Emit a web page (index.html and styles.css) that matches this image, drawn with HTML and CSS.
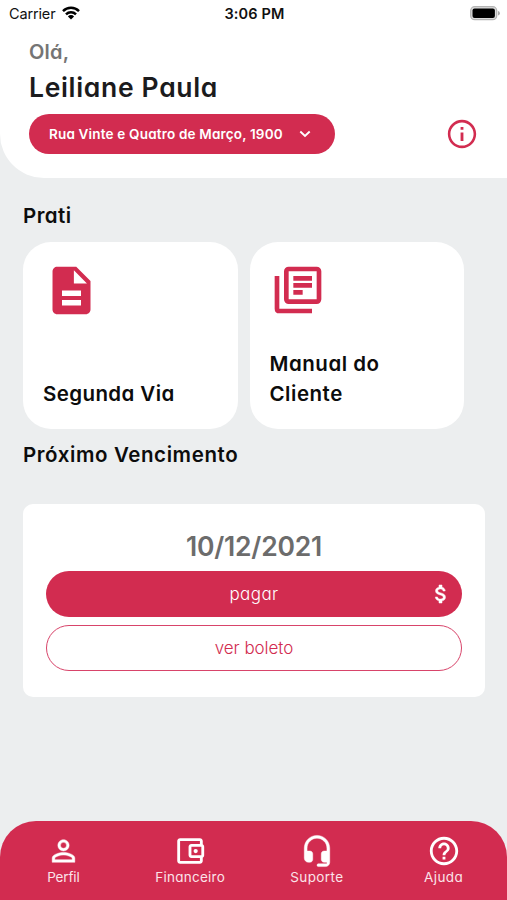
FILE: index.html
```
<!DOCTYPE html>
<html lang="pt-BR">
<head>
<meta charset="utf-8">
<title>Prati</title>
<link rel="stylesheet" href="styles.css">
</head>
<body>
<div class="app">
  <header class="header">
    <div class="status">
      <div class="carrier">Carrier
        <svg width="18" height="14" viewBox="0 0 18 14"><g fill="none" stroke="#000" stroke-width="2.5"><path d="M1 5.1a11.4 11.4 0 0 1 16 0"/><path d="M4 8.3a7.1 7.1 0 0 1 10 0"/></g><path d="M9 13.6 5.9 10.4a4.4 4.4 0 0 1 6.2 0z"/></svg>
      </div>
      <div class="time">3:06 PM</div>
      <svg class="battery" width="30" height="15" viewBox="0 0 30 15"><rect x=".7" y=".7" width="26" height="13" rx="4" fill="#ddd" stroke="#b4b4b4" stroke-width="1.3"/><rect x="2.5" y="2.4" width="22.4" height="9.6" rx="2"/><path d="M28 5v4.6q1.9-.6 1.9-2.3T28 5z" fill="#aaa"/></svg>
    </div>
    <p class="hello">Olá,</p>
    <h1 class="name">Leiliane Paula</h1>
    <div class="address-row">
      <button class="address"><span>Rua Vinte e Quatro de Março, 1900</span>
        <svg width="12" height="8" viewBox="0 0 12 8"><path d="m1.3 1.5 4.7 4.4 4.7-4.4" fill="none" stroke="#fff" stroke-width="1.9"/></svg>
      </button>
      <svg class="info" width="34" height="34" viewBox="0 0 24 24"><path d="M11 7h2v2h-2zm0 4h2v6h-2zm1-9C6.48 2 2 6.48 2 12s4.48 10 10 10 10-4.48 10-10S17.52 2 12 2zm0 18.2c-4.52 0-8.2-3.68-8.2-8.2S7.48 3.8 12 3.8s8.2 3.68 8.2 8.2-3.68 8.2-8.2 8.2z"/></svg>
    </div>
  </header>

  <main class="main">
    <h2 class="title">Prati</h2>
    <div class="cards">
      <a class="card">
        <svg width="57" height="57" viewBox="0 0 24 24"><path d="M14 2H6c-1.1 0-1.99.9-1.99 2L4 20c0 1.1.89 2 1.99 2H18c1.1 0 2-.9 2-2V8l-6-6zm2 16.3H8v-2.3h8v2.3zm0-4H8V12h8v2.3zm-3-5.3V3.5L18.5 9H13z"/></svg>
        <span class="segunda">Segunda Via</span>
      </a>
      <a class="card">
        <svg width="56" height="56" viewBox="0 0 24 24"><g fill="none" stroke="#d22c50" stroke-width="2"><rect x="7" y="3" width="14" height="14" rx="1"/><path d="M3 6v14q0 1 1 1h14"/></g><path d="M10 6h8v2h-8zm0 3h8v2h-8zm0 3h4v2h-4z"/></svg>
        <span>Manual do Cliente</span>
      </a>
    </div>
    <h2 class="title due">Próximo Vencimento</h2>
    <section class="panel">
      <div class="date">10/12/2021</div>
      <button class="btn pay"><span>pagar</span>
        <svg class="dollar" width="24" height="24" viewBox="0 0 24 24"><path d="M11.8 10.9c-2.27-.59-3-1.2-3-2.15 0-1.09 1.01-1.85 2.7-1.85 1.78 0 2.44.85 2.5 2.1h2.21c-.07-1.72-1.12-3.3-3.21-3.81V3h-3v2.16c-1.94.42-3.5 1.68-3.5 3.61 0 2.31 1.91 3.46 4.7 4.13 2.5.6 3 1.48 3 2.41 0 .69-.49 1.79-2.7 1.79-2.06 0-2.87-.92-2.98-2.1h-2.2c.12 2.19 1.76 3.42 3.68 3.83V21h3v-2.15c1.95-.37 3.5-1.5 3.5-3.55 0-2.84-2.43-3.81-4.7-4.4z"/></svg>
      </button>
      <button class="btn bill">ver boleto</button>
    </section>
  </main>

  <nav class="nav">
    <a class="tab"><svg class="bold" width="35" height="35" viewBox="0 0 24 24"><path d="M12 5.9a2.1 2.1 0 1 1 0 4.2 2.1 2.1 0 0 1 0-4.2m0 9c2.97 0 6.1 1.46 6.1 2.1v1.1H5.9V17c0-.64 3.13-2.1 6.1-2.1M12 4C9.79 4 8 5.79 8 8s1.79 4 4 4 4-1.79 4-4-1.79-4-4-4zm0 9c-2.67 0-8 1.34-8 4v3h16v-3c0-2.66-5.33-4-8-4z"/></svg><span class="perfil">Perfil</span></a>
    <a class="tab"><svg width="34" height="34" viewBox="0 0 24 24"><path d="M21 7.28V5c0-1.1-.9-2-2-2H5c-1.11 0-2 .9-2 2v14c0 1.1.89 2 2 2h14c1.1 0 2-.9 2-2v-2.28c.59-.35 1-.98 1-1.72V9c0-.74-.41-1.37-1-1.72zM20 9v6h-7V9h7zM5 19V5h14v2h-6c-1.1 0-2 .9-2 2v6c0 1.1.9 2 2 2h6v2H5z"/><circle cx="16" cy="12" r="1.5"/></svg><span class="financeiro">Financeiro</span></a>
    <a class="tab"><svg class="bold" width="34" height="34" viewBox="0 0 24 24"><path d="M12 1c-4.97 0-9 4.03-9 9v7c0 1.66 1.34 3 3 3h1c1.1 0 2-.9 2-2v-4c0-1.1-.9-2-2-2H5v-2c0-3.87 3.13-7 7-7s7 3.13 7 7v2h-2c-1.1 0-2 .9-2 2v4c0 1.1.9 2 2 2h2v1h-6c-.55 0-1 .45-1 1s.45 1 1 1h5c1.66 0 3-1.34 3-3V10c0-4.97-4.03-9-9-9z"/></svg><span class="suporte">Suporte</span></a>
    <a class="tab"><svg width="34" height="34" viewBox="0 0 24 24"><path d="M11 18h2v-2h-2v2zm1-16C6.48 2 2 6.48 2 12s4.48 10 10 10 10-4.48 10-10S17.52 2 12 2zm0 18c-4.41 0-8-3.59-8-8s3.59-8 8-8 8 3.59 8 8-3.59 8-8 8zm0-14c-2.21 0-4 1.79-4 4h2c0-1.1.9-2 2-2s2 .9 2 2c0 2-3 1.75-3 5h2c0-2.25 3-2.5 3-5 0-2.21-1.79-4-4-4z"/></svg><span class="ajuda">Ajuda</span></a>
  </nav>
</div>
</body>
</html>
```
FILE: styles.css
```
* { box-sizing: border-box; margin: 0; }
body {
  font-family: Inter, sans-serif;
  font-feature-settings: "cv11";
  color: #0c0c0c;
  background: #eceeef;
}
button { font: inherit; font-feature-settings: inherit; border: 0; }
svg { display: block; flex: none; fill: #d22c50; }
.app { height: 900px; display: flex; flex-direction: column; overflow: hidden; }

.header { height: 178px; padding: 0 29px; background: #fff; border-bottom-left-radius: 44px; flex: none; }
.status {
  height: 28px;
  margin: 0 -22px 0 -20px;
  padding-bottom: 1px;
  display: grid;
  grid-template-columns: 1fr auto 1fr;
  align-items: center;
  font-size: 14.5px;
  color: #111;
  font-feature-settings: normal;
}
.status svg { fill: #000; }
.carrier { display: flex; gap: 7px; align-items: center; letter-spacing: -.15px; }
.carrier svg { margin-bottom: 2px; }
.time { font-weight: 600; letter-spacing: .13px; }
.battery { justify-self: end; }
.hello { margin-top: 12px; line-height: 24px; font-size: 20px; font-weight: 600; letter-spacing: .2px; color: #757575; }
.name { margin-top: 7px; line-height: 32px; font-size: 26.5px; font-weight: 600; letter-spacing: .67px; color: #1b1b1d; white-space: nowrap; }
.address-row { margin-top: 11px; display: flex; align-items: center; justify-content: space-between; }
.address {
  width: 306px;
  height: 40px;
  padding: 0 24px 0 20px;
  display: flex;
  align-items: center;
  justify-content: space-between;
  border-radius: 20px;
  background: #d22c50;
  color: #fff;
  font-size: 13.5px;
  font-weight: 600;
  letter-spacing: .18px;
  white-space: nowrap;
}
.info { margin-right: -1px; }

.main { flex: 1; padding: 0 23px; }
.title { font-size: 20.5px; line-height: 30px; font-weight: 600; letter-spacing: .45px; margin-top: 23px; }
.cards { display: flex; gap: 12px; margin-top: 11px; }
.card {
  width: 214.5px;
  height: 187px;
  padding: 20px;
  display: flex;
  flex-direction: column;
  justify-content: space-between;
  background: #fff;
  border-radius: 28px;
  font-size: 20.5px;
  line-height: 30px;
  font-weight: 600;
  letter-spacing: .52px;
}
.card span { width: 150px; }
.card .segunda { letter-spacing: .4px; }
.due { margin-top: 11px; letter-spacing: .6px; }
.panel {
  width: 462px;
  height: 193px;
  margin-top: 34px;
  padding: 25px 23px 0;
  background: #fff;
  border-radius: 10px;
}
.date { height: 34px; line-height: 34px; text-align: center; font-size: 26.5px; font-weight: 600; letter-spacing: -.2px; color: #6c6c6c; }
.btn {
  width: 100%;
  height: 46px;
  border-radius: 23px;
  display: flex;
  align-items: center;
  justify-content: center;
  font-size: 17px;
  font-weight: 300;
}
.pay { margin-top: 8px; position: relative; background: #d22c50; color: #fff; letter-spacing: .4px; }
.dollar { position: absolute; right: 9px; fill: #fff; stroke: #fff; stroke-width: .5; }
.bill { margin-top: 8px; padding-bottom: 2px; background: #fff; border: 1.5px solid #d8446a; color: #d22c50; letter-spacing: -.05px; }

.nav {
  height: 79px;
  flex: none;
  padding-top: 13px;
  display: grid;
  grid-template-columns: repeat(4, 1fr);
  background: #d22c50;
  border-radius: 36px 36px 0 0;
}
.nav svg { fill: #fff; height: 34px; }
.nav .bold { stroke: #fff; stroke-width: .3; }
.tab { display: flex; flex-direction: column; align-items: center; font-size: 13.5px; line-height: 18px; color: #fbe3e9; }
.perfil { letter-spacing: -.15px; }
.financeiro { letter-spacing: .25px; }
.suporte { letter-spacing: .4px; }
.ajuda { letter-spacing: .45px; }
```
